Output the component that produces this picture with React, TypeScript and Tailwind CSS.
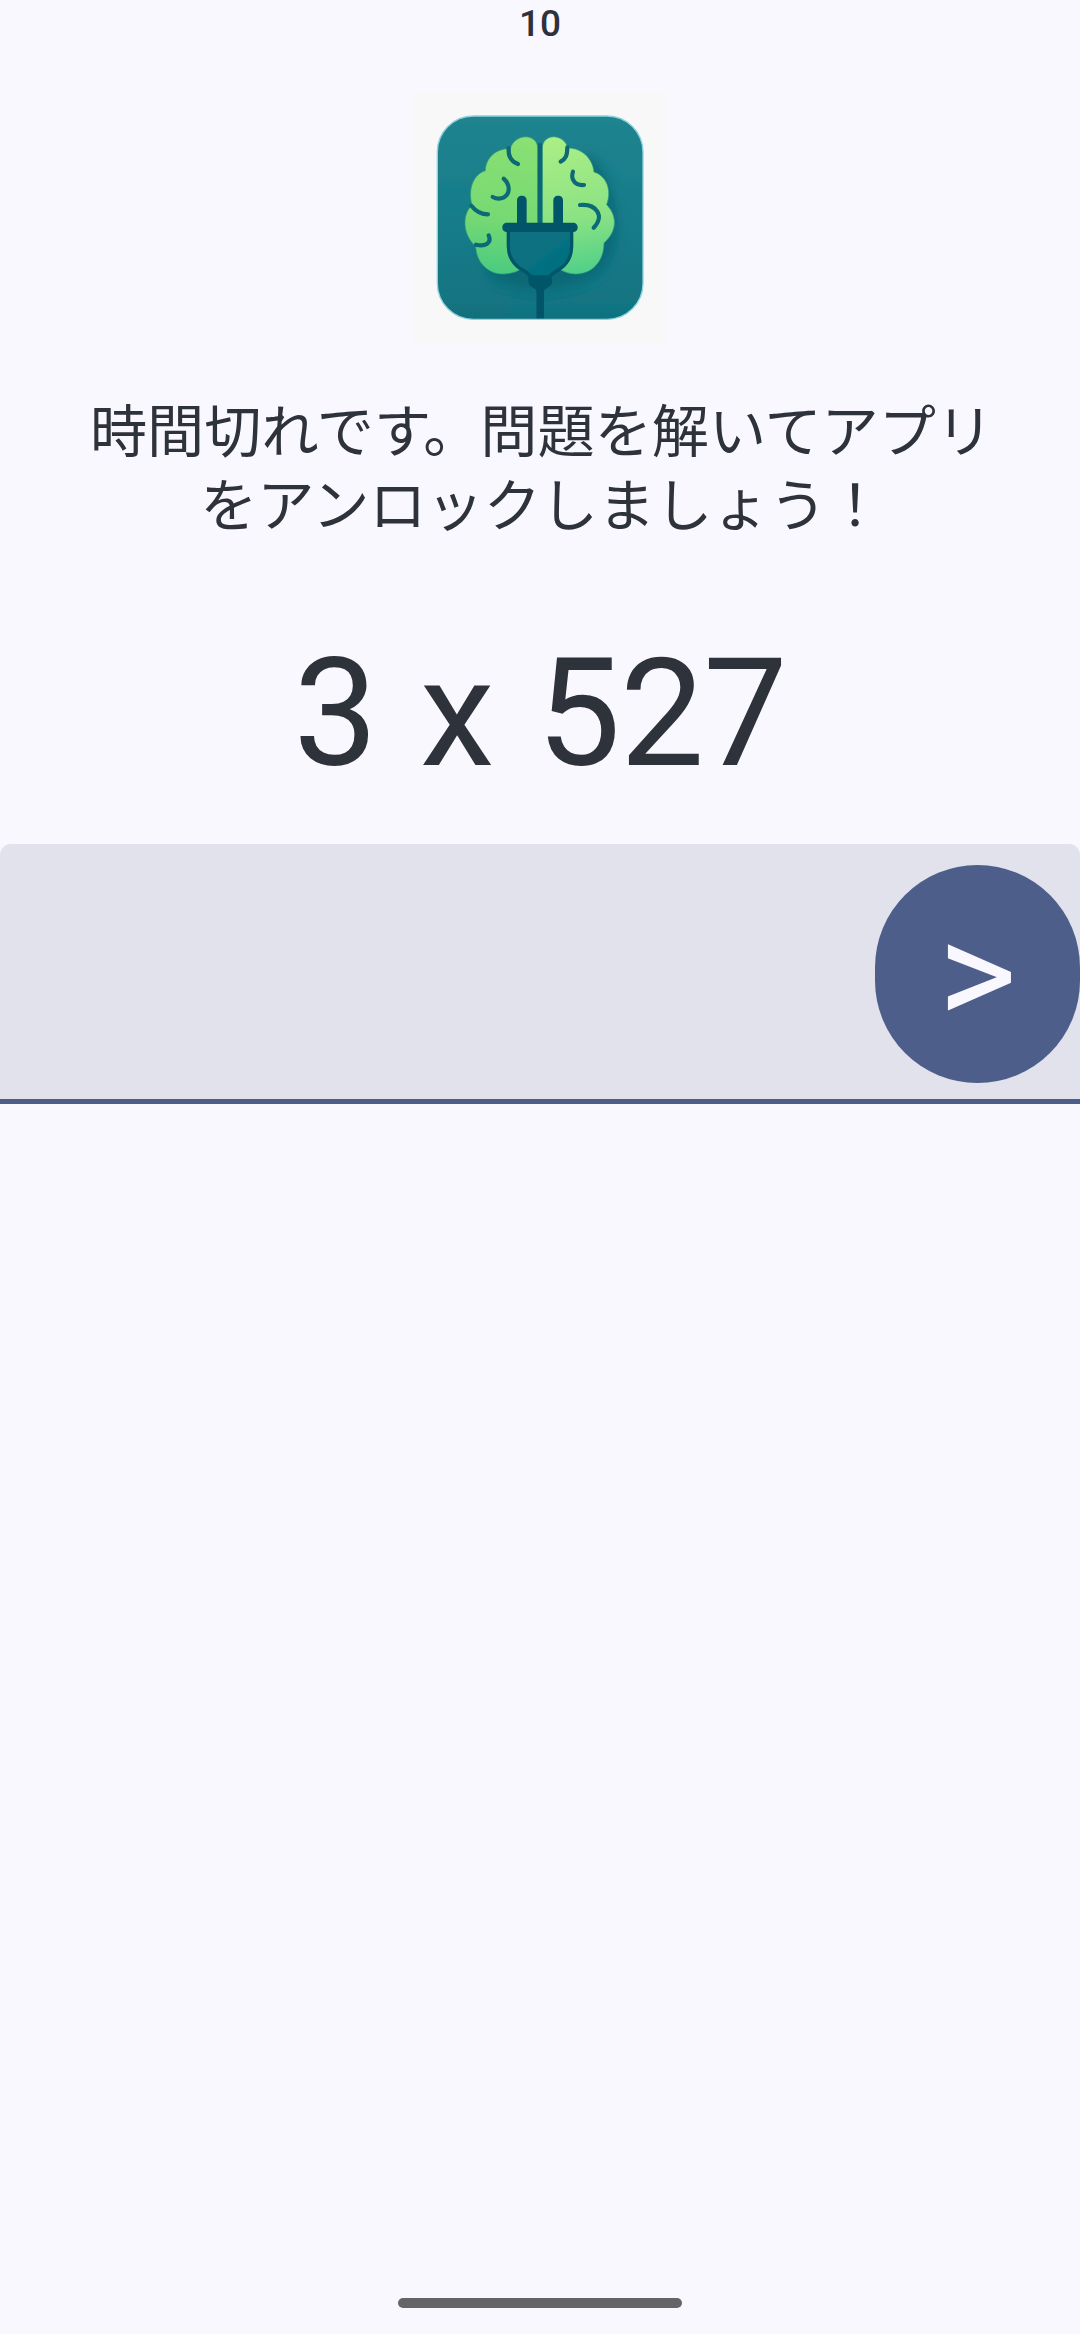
function BrainPlugLogo() {
  return (
    <svg viewBox="42 36 756 756" className="h-[252px] w-[252px] shrink-0" aria-hidden="true">
      <defs>
        <linearGradient id="tile" x1="0" y1="0" x2="0" y2="1">
          <stop offset="0" stopColor="#20848f" />
          <stop offset="0.5" stopColor="#167c8a" />
          <stop offset="1" stopColor="#11727f" />
        </linearGradient>
        <linearGradient id="left" gradientUnits="userSpaceOnUse" x1="340" y1="170" x2="300" y2="582">
          <stop offset="0" stopColor="#8ae073" />
          <stop offset="0.6" stopColor="#76d973" />
          <stop offset="1" stopColor="#4acb80" />
        </linearGradient>
        <linearGradient id="right" gradientUnits="userSpaceOnUse" x1="470" y1="170" x2="540" y2="582">
          <stop offset="0" stopColor="#abef86" />
          <stop offset="0.6" stopColor="#8be283" />
          <stop offset="1" stopColor="#4fd089" />
        </linearGradient>
        <linearGradient id="plug" x1="0" y1="0" x2="1" y2="1">
          <stop offset="0" stopColor="#0d7180" />
          <stop offset="1" stopColor="#027080" />
        </linearGradient>
        <filter id="shade" x="-20%" y="-20%" width="140%" height="140%">
          <feGaussianBlur stdDeviation="18" />
        </filter>
        <filter id="soft" x="-5%" y="-5%" width="110%" height="110%">
          <feGaussianBlur stdDeviation="2.2" />
        </filter>
      </defs>
      <rect x="42" y="36" width="756" height="756" fill="#f8f8f8" />
      <g filter="url(#soft)">
        <rect x="112" y="108" width="617" height="610" rx="108" fill="url(#tile)" stroke="#8fd3dd" strokeWidth="4" />
        <path
          d="M430 230H580Q650 320 648 430Q650 520 600 570Q540 620 420 625Q330 625 270 585L250 500Z"
          fill="#055a68"
          opacity="0.55"
          filter="url(#shade)"
        />
        <path
          d="M413 205C413 160 345 158 331 206C290 204 257 232 256 272C222 282 202 325 216 376C188 400 184 460 227 500C230 555 275 592 330 580Q348 577 360 569L413 440Z"
          fill="url(#left)"
          stroke="#2c9a78"
          strokeWidth="2"
        />
        <path
          d="M427 205C427 160 490 158 504 204C545 204 578 235 582 276C620 288 636 330 620 374C650 405 655 450 612 489C612 545 575 584 524 582Q500 581 481 569L427 440Z"
          fill="url(#right)"
          stroke="#2c9a78"
          strokeWidth="2"
        />
        <g fill="none" stroke="#0b6975" strokeWidth="12.5" strokeLinecap="round">
          <path d="M326 204C324 228 334 245 354 252" />
          <path d="M502 202C502 226 498 236 482 245" />
          <path d="M311 296C331 314 331 340 312 352Q295 360 278 351" />
          <path d="M519 275C511 298 525 318 552 315" />
          <path d="M214 377C228 395 243 403 264 403" />
          <path d="M540 375C588 370 616 408 581 443" />
          <path d="M266 466C276 489 256 501 228 494" />
        </g>
        <path d="M420 190V440" stroke="#096673" strokeWidth="13" />
        <g fill="#045767">
          <rect x="351" y="347" width="29" height="95" rx="13" />
          <rect x="460" y="347" width="29" height="95" rx="13" />
          <path d="M384 580H456V607Q456 616 446 621L432 630V715H409V630L396 621Q386 616 386 605Z" />
        </g>
        <path
          d="M325 448H515V498C515 538 497 560 464 576L446 592H396L378 576C345 560 325 538 325 498Z"
          fill="url(#plug)"
          stroke="#045767"
          strokeWidth="10"
        />
        <path d="M392 586H450V604H392Z" fill="#045767" />
        <rect x="307" y="428" width="226" height="28" rx="13" fill="#045767" />
      </g>
    </svg>
  );
}

export default function App() {
  return (
    <div className="flex h-[2334px] w-[1080px] flex-col items-center overflow-hidden bg-[#faf8ff] font-['Roboto','Noto_Sans_CJK_JP',sans-serif] text-[#2e323b]">
      <div className="flex h-[92px] justify-center pt-0.5 text-[37px] leading-[44px] font-medium">10</div>
      <BrainPlugLogo />
      <h1 className="mt-[52px] flex flex-col items-center pl-[3px] text-[57.17px] leading-[74px] whitespace-nowrap">
        <span>
          時間切れで<span className="tracking-[-8px]">す</span>。問題を解いてアプリ
        </span>
        <span className="pl-px">をアンロックしましょう！</span>
      </h1>
      <p className="mt-[75px] h-[190px] text-[150px] leading-[190px] tracking-[-1px] whitespace-pre [word-spacing:7px]">3 x 527</p>
      <div className="mt-[35px] flex h-[260px] w-full items-center rounded-t-[11px] border-b-[5px] border-[#4d5e8b] bg-[#e1e2ec]">
        <input aria-label="答え" className="h-full min-w-0 flex-1 bg-transparent px-10 text-[100px] outline-none" />
        <button className="mt-[5px] flex h-[218px] w-[205px] items-center justify-center rounded-full bg-[#4d5e8b] text-[151px] leading-[190px] text-[#faf8ff]">
          <span>&gt;</span>
        </button>
      </div>
      <div className="mt-auto mb-[26px] h-2.5 w-[284px] rounded-full bg-[#656567]" />
    </div>
  );
}
